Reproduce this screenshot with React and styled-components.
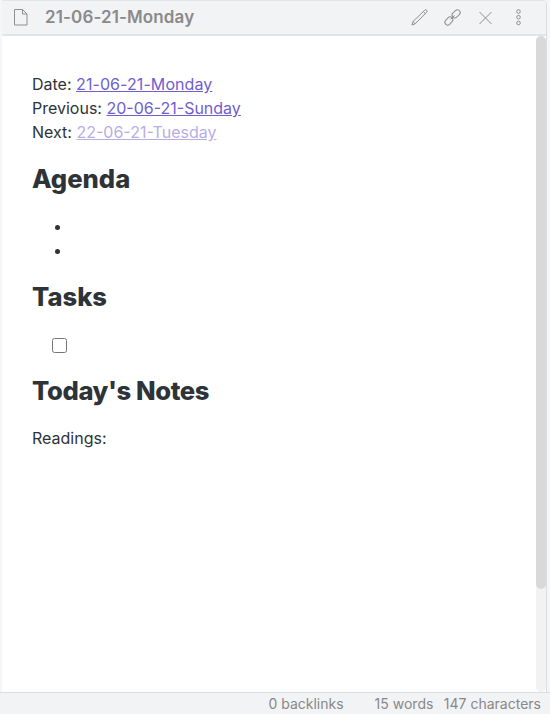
import React from "react";
import styled, { createGlobalStyle } from "styled-components";

const GlobalStyle = createGlobalStyle`
  * { box-sizing: border-box; }
  body {
    margin: 0;
    background: #f5f6f8;
    color: #2e3338;
    font-family: Inter, sans-serif;
    font-size: 16px;
    line-height: 24px;
  }
`;

const Window = styled.div`
  height: 714px;
  display: flex;
  flex-direction: column;
  overflow: hidden;
`;

const Pane = styled.section`
  height: 692px;
  margin: 0 3px 0 2px;
  width: 545px;
  display: flex;
  flex-direction: column;
  border-right: 1px solid #dcdddf;
  border-top: 1px solid #e3e4e6;
  border-top-right-radius: 5px;
  background: #fff;
`;

const Header = styled.header`
  height: 35px;
  flex: none;
  display: flex;
  align-items: center;
  padding: 0 18.6px 1px 11px;
  border-bottom: 2px solid #e3e4e6;
  border-top-right-radius: 4px;
  background: #f2f3f5;
  color: #8a8a8a;
`;

const Title = styled.div`
  flex: 1;
  margin: -1px 0 0 15px;
  font-size: 17px;
  font-weight: 600;
  letter-spacing: 0.12px;
`;

const Actions = styled.div`
  display: flex;
  gap: 16px;
`;

const Icon = styled.svg`
  display: block;
  width: 17px;
  height: 17px;
  fill: none;
  stroke: #8f8f8f;
  stroke-width: 1;
  overflow: visible;
`;

const Body = styled.div`
  flex: 1;
  min-height: 0;
  display: flex;
`;

const Note = styled.main`
  flex: 1;
  padding: 36px 30px 0;
`;

const Paragraph = styled.p`
  margin: 0;
`;

const Link = styled.a`
  color: ${(p) => (p.$unresolved ? "#b9ade5" : "#705dcf")};
  letter-spacing: ${(p) => p.$tracking || 0}px;
  text-decoration: underline;
`;

const Heading = styled.h2`
  margin: 16px 0;
  font-size: 25.6px;
  line-height: 38px;
  font-weight: 800;
  letter-spacing: ${(p) => p.$tracking || 0}px;
`;

const Bullets = styled.ul`
  margin: 0;
  padding-left: 40px;
`;

const Bullet = styled.li`
  height: 24px;
`;

const Task = styled.div`
  height: 24px;
  display: flex;
  align-items: center;
  padding: 1px 0 0 20px;
`;

const Checkbox = styled.span`
  width: 15px;
  height: 15px;
  margin-top: 1px;
  border: 1px solid #777;
  border-radius: 2.5px;
`;

const ScrollTrack = styled.div`
  width: 10px;
  border-radius: 5px;
  background: #f2f2f2;
`;

const ScrollThumb = styled.div`
  height: 553px;
  border-radius: 5px;
  background: #d9d9d9;
`;

const StatusBar = styled.footer`
  height: 22px;
  display: flex;
  justify-content: flex-end;
  padding-right: 9px;
  border-top: 1px solid #dcdddf;
  background: #f2f3f5;
  color: #888;
  font-size: 14px;
  line-height: 22px;
`;

const Status = styled.span`
  margin-left: ${(p) => p.$gap || 0}px;
  white-space: nowrap;
`;

export default function App() {
  return (
    <>
      <GlobalStyle />
      <Window>
        <Pane>
          <Header>
            <Icon viewBox="0 0 17 17">
              <path d="M1.5.5h8l4.5 4.5v11h-12.5zM9.5.5V5H14" />
            </Icon>
            <Title>21-06-21-Monday</Title>
            <Actions>
              <Icon viewBox="0 0 17 17">
                <path d="M.9 16l1.2-3.5L13.7 1.2a1.4 1.4 0 0 1 2 2L4.2 14.8zM2.1 12.5l2.1 2.3M12.3 2.5l2.2 2.2" />
              </Icon>
              <Icon viewBox="0 0 17 17">
                <rect x="-4.5" y="-2.8" width="9" height="5.6" rx="2.8" transform="translate(4.9 12) rotate(-47)" />
                <rect x="-4.5" y="-2.8" width="9" height="5.6" rx="2.8" transform="translate(12.1 4.8) rotate(-42)" />
                <path d="M6.5 10.4l4-4" />
              </Icon>
              <Icon viewBox="0 0 17 17">
                <path d="M2.5 3l12 12M14.5 3l-12 12" />
              </Icon>
              <Icon viewBox="0 0 17 17">
                <circle cx="8.5" cy="2.5" r="1.8" />
                <circle cx="8.5" cy="8.2" r="1.8" />
                <circle cx="8.5" cy="14" r="1.8" />
              </Icon>
            </Actions>
          </Header>
          <Body>
            <Note>
              <Paragraph>
                Date: <Link $tracking={0.08}>21-06-21-Monday</Link>
                <br />
                Previous: <Link>20-06-21-Sunday</Link>
                <br />
                Next: <Link $unresolved>22-06-21-Tuesday</Link>
              </Paragraph>
              <Heading>Agenda</Heading>
              <Bullets>
                <Bullet />
                <Bullet />
              </Bullets>
              <Heading>Tasks</Heading>
              <Task>
                <Checkbox role="checkbox" aria-checked="false" />
              </Task>
              <Heading $tracking={-0.37}>Today's Notes</Heading>
              <Paragraph>Readings:</Paragraph>
            </Note>
            <ScrollTrack>
              <ScrollThumb />
            </ScrollTrack>
          </Body>
        </Pane>
        <StatusBar>
          <Status>0 backlinks</Status>
          <Status $gap={31}>15 words</Status>
          <Status $gap={10.5}>147 characters</Status>
        </StatusBar>
      </Window>
    </>
  );
}
